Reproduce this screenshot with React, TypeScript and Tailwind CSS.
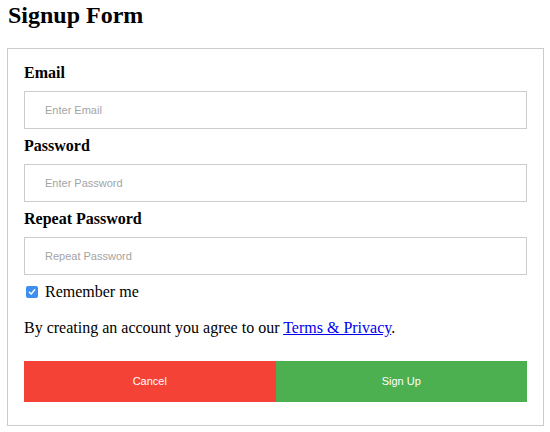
import React from 'react';

const serif = { fontFamily: '"Liberation Serif", "Times New Roman", serif' };

function Field({ label, placeholder, type }: { label: string; placeholder: string; type: string }) {
  return (
    <div className="mb-[8px]">
      <label className="block h-[18px] text-[16px] font-bold leading-[18px] text-black">{label}</label>
      <input
        type={type}
        placeholder={placeholder}
        className="mt-[9px] block h-[38px] w-full border border-[#ccc] px-[20px] text-[11px] font-['Liberation_Sans',Arial,sans-serif] placeholder:text-[#a4a4a4] outline-none"
      />
    </div>
  );
}

export default function App() {
  return (
    <div className="bg-white w-[550px] h-[432px] px-[8px] pt-[1px] text-black" style={serif}>
      <h2 className="h-[28px] text-[24px] font-bold leading-[28px]">Signup Form</h2>

      <form className="mt-[19px] w-[537px] -ml-[1px] border border-[#ccc] px-[16px] pt-[15px] pb-[23px]">
        <Field label="Email" placeholder="Enter Email" type="text" />
        <Field label="Password" placeholder="Enter Password" type="password" />
        <Field label="Repeat Password" placeholder="Repeat Password" type="password" />

        {/* Remember me */}
        <label className="flex h-[18px] items-center text-[16px] leading-[18px]">
          <span className="ml-[2px] mr-[7px] flex h-[12px] w-[12px] items-center justify-center rounded-[2px] bg-[#3d8ef0]">
            <svg width="8" height="8" viewBox="0 0 8 8" fill="none">
              <path d="M1.3 4.2 L3.2 6 L6.7 1.8" stroke="white" strokeWidth="1.4" strokeLinecap="round" strokeLinejoin="round" />
            </svg>
          </span>
          Remember me
        </label>

        <p className="mt-[18px] h-[18px] text-[16px] leading-[18px]">
          By creating an account you agree to our{' '}
          <a href="#" className="text-[#0000ee] underline">
            Terms &amp; Privacy
          </a>
          .
        </p>

        {/* Buttons */}
        <div className="mt-[24px] flex">
          <button
            type="button"
            className="h-[41px] flex-1 bg-[#f44336] text-[11px] text-white font-['Liberation_Sans',Arial,sans-serif]"
          >
            Cancel
          </button>
          <button
            type="submit"
            className="h-[41px] flex-1 bg-[#4caf50] text-[11px] text-white font-['Liberation_Sans',Arial,sans-serif]"
          >
            Sign Up
          </button>
        </div>
      </form>
    </div>
  );
}
